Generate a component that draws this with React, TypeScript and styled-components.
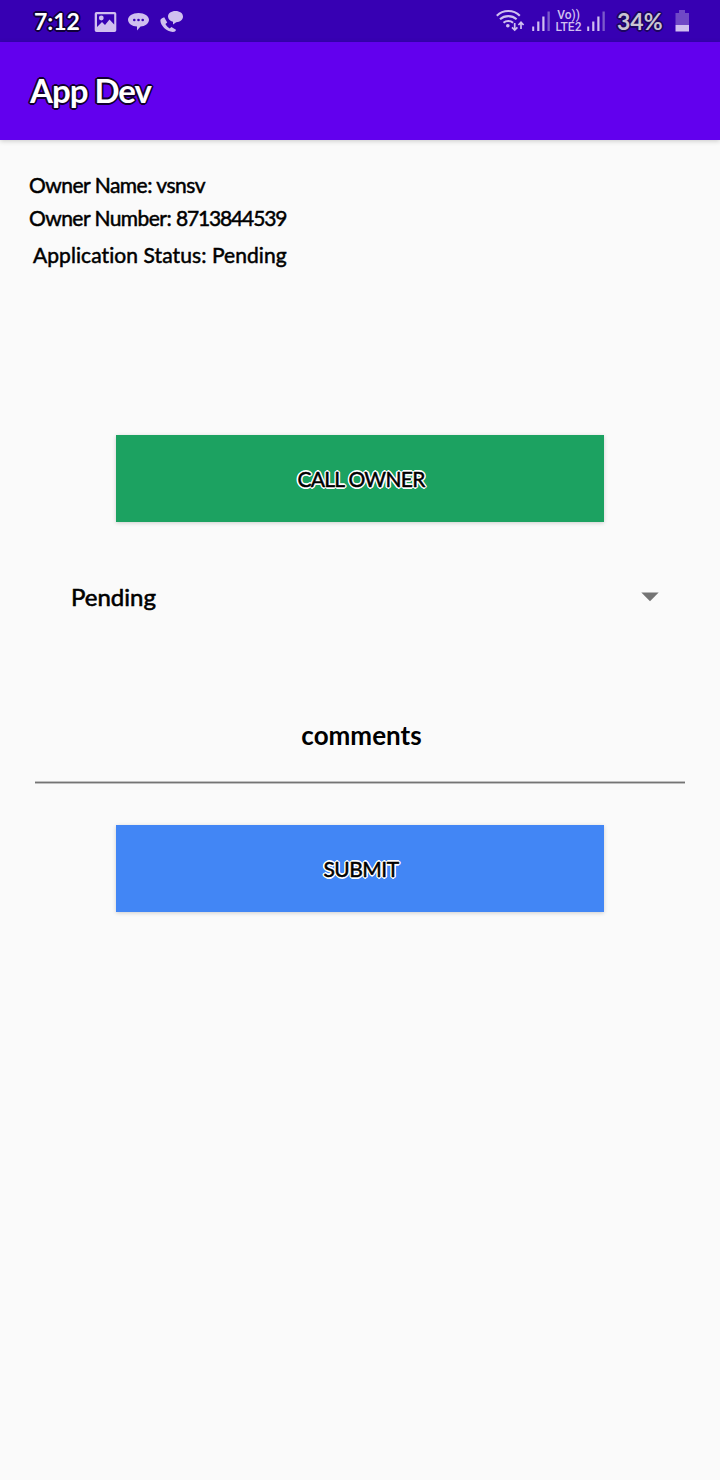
import React from 'react';
import styled, { createGlobalStyle, css } from 'styled-components';

const GlobalStyle = createGlobalStyle`
  * { box-sizing: border-box; }
  body { margin: 0; background: #fafafa; }
`;

const outline = (c: string, r: number) => {
  const d = r * 0.72;
  return css`
    text-shadow: ${r}px 0 0.5px ${c}, -${r}px 0 0.5px ${c}, 0 ${r}px 0.5px ${c}, 0 -${r}px 0.5px ${c},
      ${d}px ${d}px 0.5px ${c}, -${d}px ${d}px 0.5px ${c}, ${d}px -${d}px 0.5px ${c}, -${d}px -${d}px 0.5px ${c};
  `;
};

const Screen = styled.div`
  width: 720px;
  height: 1480px;
  display: flex;
  flex-direction: column;
  background: #fafafa;
  overflow: hidden;
  font-family: Lato, 'Open Sans', sans-serif;
  font-variant-ligatures: none;
  color: #000;
`;

const StatusBar = styled.header`
  height: 42px;
  flex: none;
  display: flex;
  justify-content: space-between;
  padding: 0 30px 0 34px;
  background: #3700b3;
`;

const StatusGroup = styled.div`
  display: flex;
  align-items: flex-start;
  svg { display: block; flex: none; }
`;

const AppBar = styled.div`
  height: 98px;
  flex: none;
  display: flex;
  align-items: center;
  padding: 0 30px;
  background: #6200ee;
  box-shadow: 0 1px 5px rgba(0, 0, 0, 0.2);
`;

const Label = styled.span<{ $size: number; $track?: number; $stroke?: number; $bold?: boolean; $color?: string; $edge?: string }>`
  font-size: ${p => p.$size}px;
  line-height: 1.2;
  letter-spacing: ${p => p.$track ?? 0}px;
  font-weight: ${p => (p.$bold ? 700 : 400)};
  color: ${p => p.$color ?? '#000'};
  -webkit-text-stroke: ${p => p.$stroke ?? 0}px ${p => p.$color ?? '#000'};
  white-space: pre;
  ${p => p.$edge && outline(p.$edge, 1.8)}
`;

const Clock = styled(Label)`
  width: 60px;
  margin-top: 8px;
`;

const Battery = styled(Label)`
  width: 58px;
  margin-top: 8px;
`;

const Network = styled.div`
  width: 32px;
  margin-top: 9px;
  padding: 0 5px 0 0;
  display: flex;
  flex-direction: column;
  align-items: center;
  font: 500 12px/12px Roboto, sans-serif;
  color: #d0bfef;
`;

const Content = styled.main`
  display: flex;
  flex-direction: column;
  align-items: stretch;
`;

const Details = styled.section`
  height: 295px;
  padding: 32px 29px 0;
  display: flex;
  flex-direction: column;
`;

const DetailRow = styled.div<{ $height: number; $indent?: number }>`
  height: ${p => p.$height}px;
  padding-left: ${p => p.$indent ?? 0}px;
  display: flex;
  align-items: flex-start;
`;

const Button = styled.button<{ $bg: string }>`
  width: 488px;
  height: 87px;
  align-self: center;
  flex: none;
  display: flex;
  align-items: center;
  justify-content: center;
  padding: 0 0 0 2px;
  border: 0;
  font-family: inherit;
  background: ${p => p.$bg};
  box-shadow: 0 1px 4px rgba(0, 0, 0, 0.18);
`;

const Select = styled.div`
  height: 150px;
  padding: 0 61px 0 71px;
  display: flex;
  align-items: center;
  justify-content: space-between;
`;

const Field = styled.div`
  height: 111px;
  margin: 0 35px 42px;
  padding: 48px 0 0 3px;
  display: flex;
  justify-content: center;
  border-bottom: 1px solid #747474;
  box-shadow: 0 1px 0 #c0c0c0, inset 0 -1px 0 #c0c0c0;
`;

const tint = '#d0bfef';

const PictureIcon = () => (
  <svg width="33" height="42" viewBox="94 0 33 42">
    <path fillRule="evenodd" fill={tint} d="M96.500 12h18a1.800 1.800 0 0 1 1.800 1.800v16.400a1.800 1.800 0 0 1-1.800 1.800h-18a1.800 1.800 0 0 1-1.800-1.800V13.800a1.800 1.800 0 0 1 1.800-1.800zM97 14.200v12.800l5-5 3 3 4.500-5.500 4.700 5V14.200z" />
    <circle cx="101.300" cy="18" r="2.400" fill={tint} />
  </svg>
);

const ChatIcon = () => (
  <svg width="33" height="42" viewBox="127 0 33 42">
    <path fill={tint} d="M138.500 13c6 0 10.500 3 10.500 6.800s-4 6.500-8.500 6.800L137 30.500v-3.900c-5-.3-9-3-9-6.800s4.500-6.800 10.500-6.800z" />
    <g fill="#3700b3"><circle cx="134.300" cy="20" r="1.300" /><circle cx="138.500" cy="20" r="1.300" /><circle cx="142.700" cy="20" r="1.300" /></g>
  </svg>
);

const CallChatIcon = () => (
  <svg width="26" height="42" viewBox="160 0 26 42">
    <path fill={tint} d="M162 18.300l2.200-1.100 3 5.400-1.800 1.500c1 1.900 2.400 3.400 4.300 4.400l1.700-1.600 4.600 2.900c-.2 1.300-1.500 2.300-3.100 2.300-6.500-.3-12.600-6.800-12.500-11.500 0-1 .7-1.800 1.600-2.300z" />
    <path fill={tint} d="M175.500 11c4.300 0 7.500 2.200 7.500 5.600 0 3.300-3 5.600-6.800 5.700L173 24.500v-2.700c-3.100-.7-5-2.700-5-5.200 0-3.400 3.200-5.600 7.500-5.600z" />
  </svg>
);

const WifiIcon = () => (
  <svg width="36" height="42" viewBox="496 0 36 42">
    <g fill="none" stroke={tint} strokeWidth="2.100">
      <path d="M496.800 15.700c6.300-6.300 16.700-6.300 23 0" />
      <path d="M500 19.300c4.600-4.200 12-4.200 16.600 0" />
      <path d="M503.500 22.700c2.700-2.300 6.900-2.300 9.600 0" />
    </g>
    <circle cx="507.800" cy="25.700" r="1.800" fill={tint} />
    <path d="M514.700 23v7M512 27.300l2.700 2.800 2.700-2.800M521 29v-6.500M518.400 25l2.600-2.700 2.600 2.700" fill="none" stroke={tint} strokeWidth="1.700" />
  </svg>
);

const SignalIcon = ({ width }: { width: number }) => (
  <svg width={width} height="42" viewBox={`0 0 ${width} 42`}>
    <path fill={tint} d="M.2 26.500h2v4.500h-2zM5.200 21.500h2.200v9.500H5.200zM10.300 16.500h2.200v14.500h-2.200z" />
    <path fill="#7c5acb" d="M15.500 11.500h2.300v19.500h-2.300z" />
  </svg>
);

const BatteryIcon = () => (
  <svg width="15" height="42" viewBox="0 0 15 42">
    <path fill="#7048c6" d="M4 10h6v3h4v12H.5V13H4z" />
    <path fill="#d0bfef" d="M.5 25H14v6.500H.5z" />
  </svg>
);

const Caret = () => (
  <svg width="18" height="10" viewBox="0 0 18 10">
    <path fill="#747474" d="M.3.500h17.400L9 9.300z" />
  </svg>
);

export default function App() {
  return (
    <Screen>
      <GlobalStyle />
      <StatusBar>
        <StatusGroup>
          <Clock $size={23} $bold $color="#fff" $edge="#10003a">7:12</Clock>
          <PictureIcon />
          <ChatIcon />
          <CallChatIcon />
        </StatusGroup>
        <StatusGroup>
          <WifiIcon />
          <SignalIcon width={23} />
          <Network><span>Vo))</span><span>LTE2</span></Network>
          <SignalIcon width={30} />
          <Battery $size={23} $bold $color="#c9c5d2" $edge="#1c0660">34%</Battery>
          <BatteryIcon />
        </StatusGroup>
      </StatusBar>
      <AppBar>
        <Label $size={33} $track={-1} $bold $color="#fff" $edge="#120030">App Dev</Label>
      </AppBar>
      <Content>
        <Details>
          <DetailRow $height={33}><Label $size={21} $track={-0.5} $stroke={0.5}>Owner Name: vsnsv</Label></DetailRow>
          <DetailRow $height={37}>
            <Label $size={21} $track={-0.55} $stroke={0.5}>Owner Number: </Label>
            <Label $size={21} $track={-1.15} $stroke={0.5}>8713844539</Label>
          </DetailRow>
          <DetailRow $height={37} $indent={4}><Label $size={21} $track={0.08} $stroke={0.5}>Application Status: Pending</Label></DetailRow>
        </Details>
        <Button $bg="#1ca261"><Label $size={21} $track={-0.7} $stroke={0.5} $edge="#fff">CALL OWNER</Label></Button>
        <Select><Label $size={24} $stroke={0.6}>Pending</Label><Caret /></Select>
        <Field><Label $size={26} $bold>comments</Label></Field>
        <Button $bg="#4286f5"><Label $size={21} $track={-0.5} $stroke={0.5} $edge="#fff">SUBMIT</Label></Button>
      </Content>
    </Screen>
  );
}
